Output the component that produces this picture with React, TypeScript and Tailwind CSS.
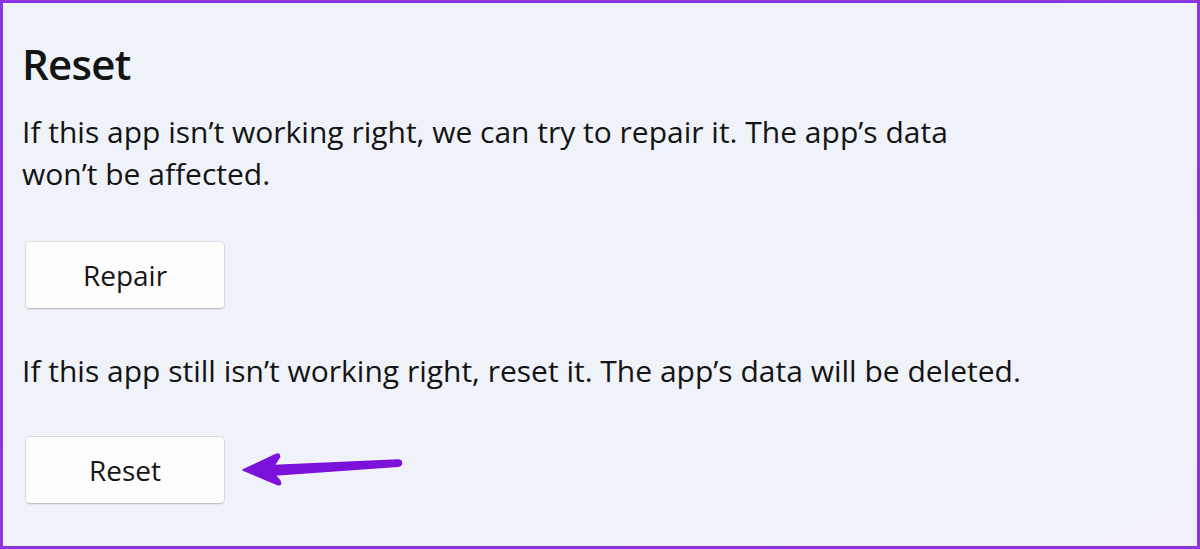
import React from 'react'

const font = { fontFamily: '"Open Sans", "Noto Sans", sans-serif' }

const ActionButton = ({ label }: { label: string }) => (
    <button
        className="w-[200px] h-[68px] shrink-0 rounded-[5px] bg-[#fdfdfe] border border-[#d8dbe0] border-b-[#bfc3c9] shadow-[0_1px_1px_rgba(0,0,0,0.06)] text-[28px] text-[#161616] flex items-center justify-center"
    >
        {label}
    </button>
)

// purple annotation arrow pointing at the Reset button
const Arrow = () => (
    <svg width="165" height="40" viewBox="0 0 165 40" className="ml-[15px] shrink-0">
        <path
            d="M3 20 L36 4.5 Q40 3 39.5 7 L34 15.5 L158 10 Q161.5 10 161.5 13 Q161.5 16 158 16.2 L35 25 L40 31 Q42 35.5 37.5 34.5 Z"
            fill="#7c12da"
            stroke="#7c12da"
            strokeWidth="1.5"
            strokeLinejoin="round"
        />
    </svg>
)

export default function App() {
    return (
        <div
            className="w-[1200px] h-[549px] border-[3px] border-[#8c35e4] bg-gradient-to-br from-[#eef3f9] to-[#f1f2f9] pl-[19px] pt-[36px] text-[#141414] overflow-hidden"
            style={font}
        >
            <h1 className="text-[42px] leading-[50px] font-semibold tracking-[-0.7px]">Reset</h1>
            <p className="mt-[22px] text-[30px] leading-[42px] w-[970px]">
                If this app isn’t working right, we can try to repair it. The app’s data won’t be affected.
            </p>
            <div className="mt-[46px] pl-[3px]">
                <ActionButton label="Repair" />
            </div>
            <p className="mt-[41px] text-[30px] leading-[42px]">
                If this app still isn’t working right, reset it. The app’s data will be deleted.
            </p>
            <div className="mt-[44px] pl-[3px] flex items-center">
                <ActionButton label="Reset" />
                <Arrow />
            </div>
        </div>
    )
}
